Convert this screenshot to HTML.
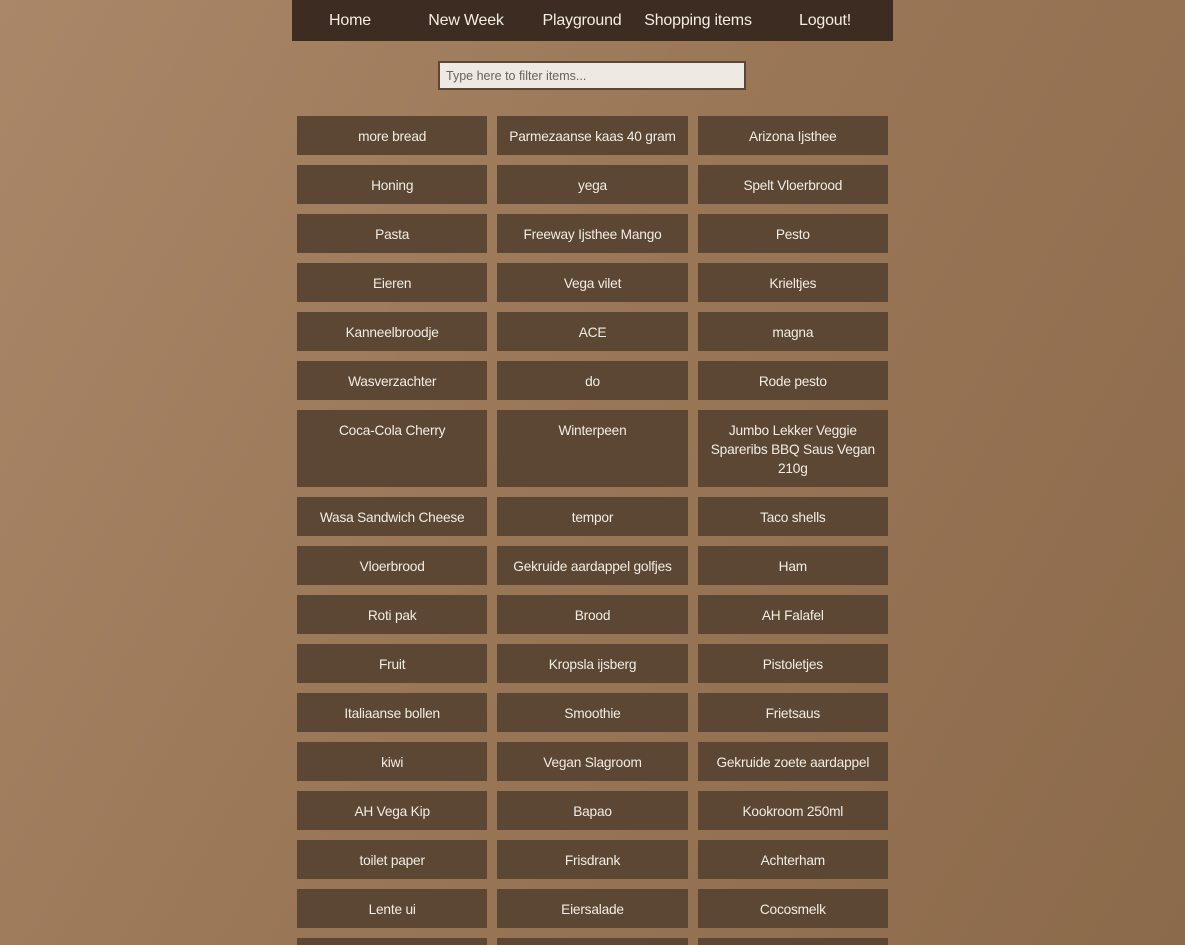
<!DOCTYPE html>
<html><head><meta charset="utf-8"><style>
html,body{margin:0;padding:0;height:945px;overflow:hidden}
.page{position:relative;width:1185px;height:945px;overflow:hidden;background:linear-gradient(120deg,#a98768 0%,#9a7757 45%,#8b6a4b 100%);font-family:"Liberation Sans",sans-serif;}
.wrap{position:absolute;left:292px;width:601px;top:0}
nav{height:41px;background:#3c2c21;position:relative}
nav span{position:absolute;top:12px;color:#f3ede6;font-size:16px;transform:translateX(-50%);white-space:nowrap;letter-spacing:-0.2px}
.inp{position:absolute;left:146px;top:61px;height:25px;background:#efe9e3;border:2px solid #5c4634;font-size:12.5px;color:#6a635d;line-height:27px;padding-left:6px;box-sizing:content-box;width:298px}
.grid{position:absolute;top:111px;left:0;width:601px;display:flex;flex-wrap:wrap}
.grid div{width:190.33px;margin:5px;background:#5c4734;color:#f2ece4;font-size:13.7px;line-height:19px;padding:11px 6px 9px;box-sizing:border-box;text-align:center;min-height:39px;letter-spacing:-0.2px}
</style></head><body><div class="page">
<div class="wrap">
<nav><span style="left:58px">Home</span><span style="left:174px">New Week</span><span style="left:290px">Playground</span><span style="left:406px">Shopping items</span><span style="left:533px">Logout!</span></nav>
<div class="inp">Type here to filter items...</div>
<div class="grid">
<div>more bread</div><div>Parmezaanse kaas 40 gram</div><div>Arizona Ijsthee</div>
<div>Honing</div><div>yega</div><div>Spelt Vloerbrood</div>
<div>Pasta</div><div>Freeway Ijsthee Mango</div><div>Pesto</div>
<div>Eieren</div><div>Vega vilet</div><div>Krieltjes</div>
<div>Kanneelbroodje</div><div>ACE</div><div>magna</div>
<div>Wasverzachter</div><div>do</div><div>Rode pesto</div>
<div>Coca-Cola Cherry</div><div>Winterpeen</div><div>Jumbo Lekker Veggie<br>Spareribs BBQ Saus Vegan<br>210g</div>
<div>Wasa Sandwich Cheese</div><div>tempor</div><div>Taco shells</div>
<div>Vloerbrood</div><div>Gekruide aardappel golfjes</div><div>Ham</div>
<div>Roti pak</div><div>Brood</div><div>AH Falafel</div>
<div>Fruit</div><div>Kropsla ijsberg</div><div>Pistoletjes</div>
<div>Italiaanse bollen</div><div>Smoothie</div><div>Frietsaus</div>
<div>kiwi</div><div>Vegan Slagroom</div><div>Gekruide zoete aardappel</div>
<div>AH Vega Kip</div><div>Bapao</div><div>Kookroom 250ml</div>
<div>toilet paper</div><div>Frisdrank</div><div>Achterham</div>
<div>Lente ui</div><div>Eiersalade</div><div>Cocosmelk</div>
<div>&nbsp;</div><div>&nbsp;</div><div>&nbsp;</div>
</div>
</div>
</div></body></html>
